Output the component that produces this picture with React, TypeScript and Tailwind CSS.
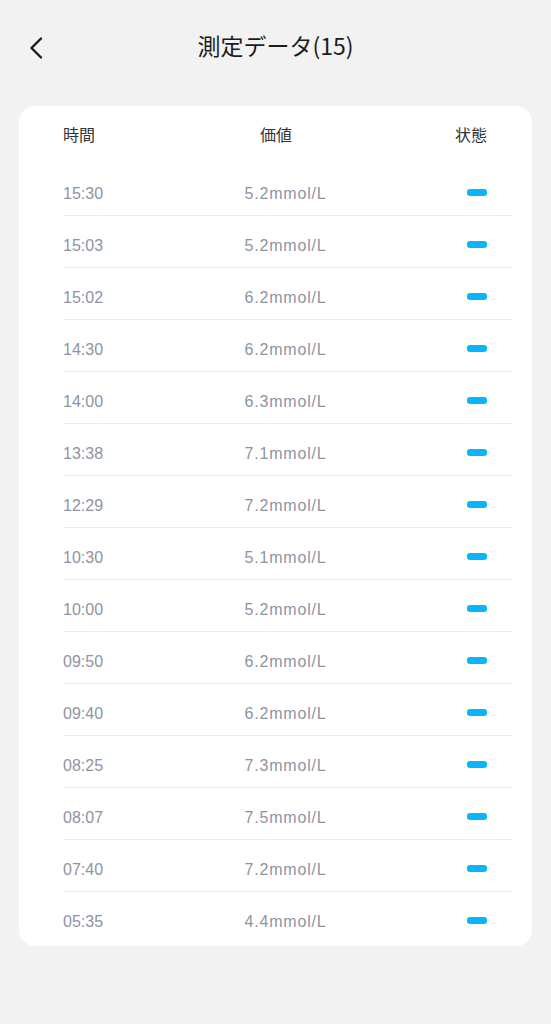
const rows = [
  { time: "15:30", value: "5.2mmol/L" },
  { time: "15:03", value: "5.2mmol/L" },
  { time: "15:02", value: "6.2mmol/L" },
  { time: "14:30", value: "6.2mmol/L" },
  { time: "14:00", value: "6.3mmol/L" },
  { time: "13:38", value: "7.1mmol/L" },
  { time: "12:29", value: "7.2mmol/L" },
  { time: "10:30", value: "5.1mmol/L" },
  { time: "10:00", value: "5.2mmol/L" },
  { time: "09:50", value: "6.2mmol/L" },
  { time: "09:40", value: "6.2mmol/L" },
  { time: "08:25", value: "7.3mmol/L" },
  { time: "08:07", value: "7.5mmol/L" },
  { time: "07:40", value: "7.2mmol/L" },
  { time: "05:35", value: "4.4mmol/L" },
];

export default function App() {
  return (
    <div className="min-h-[1024px] w-full bg-[#f2f2f2] font-['Liberation_Sans','Noto_Sans_CJK_JP',sans-serif]">
      {/* header */}
      <div className="relative flex h-[92px] items-center justify-center pb-[2px]">
        <button className="absolute left-[26px] top-[34px] p-[2px]" aria-label="back">
          <svg width="18" height="24" viewBox="0 0 18 24" fill="none" stroke="#1c1c1c" strokeWidth="2.4" strokeLinecap="round" strokeLinejoin="round">
            <path d="M13 2.5L3.5 12l9.5 9.5" />
          </svg>
        </button>
        <h1 className="text-[23px] leading-[28px] text-[#1c1c1c] font-['Noto_Sans_CJK_JP',sans-serif]">
          測定データ(15)
        </h1>
      </div>

      {/* card */}
      <div className="mx-[19px] mt-[14px] rounded-[16px] bg-white pb-[3px] pl-[44px] pr-[19px]">
        <div className="flex h-[58px] items-start pt-[18px] text-[16px] leading-[20px] text-[#333] font-['Noto_Sans_CJK_JP',sans-serif]">
          <div className="w-[170px]">時間</div>
          <div className="w-[86px] text-center">価値</div>
          <div className="flex-1 pr-[26px] text-right">状態</div>
        </div>
        {rows.map((r, i) => (
          <div
            key={i}
            className={`flex items-start pt-[20px] text-[16px] leading-[20px] text-[#8e93a4] ${
              i === rows.length - 1 ? "h-[51px]" : "h-[52px] border-b border-[#ececec]"
            }`}
          >
            <div className="w-[170px]">{r.time}</div>
            <div className="w-[105px] text-center tracking-[0.8px]">{r.value}</div>
            <div className="flex flex-1 justify-end pr-[26px] pt-[5px]">
              <span className="block h-[7px] w-[20px] rounded-[3px] bg-[#0bb4f8]" />
            </div>
          </div>
        ))}
      </div>
    </div>
  );
}
